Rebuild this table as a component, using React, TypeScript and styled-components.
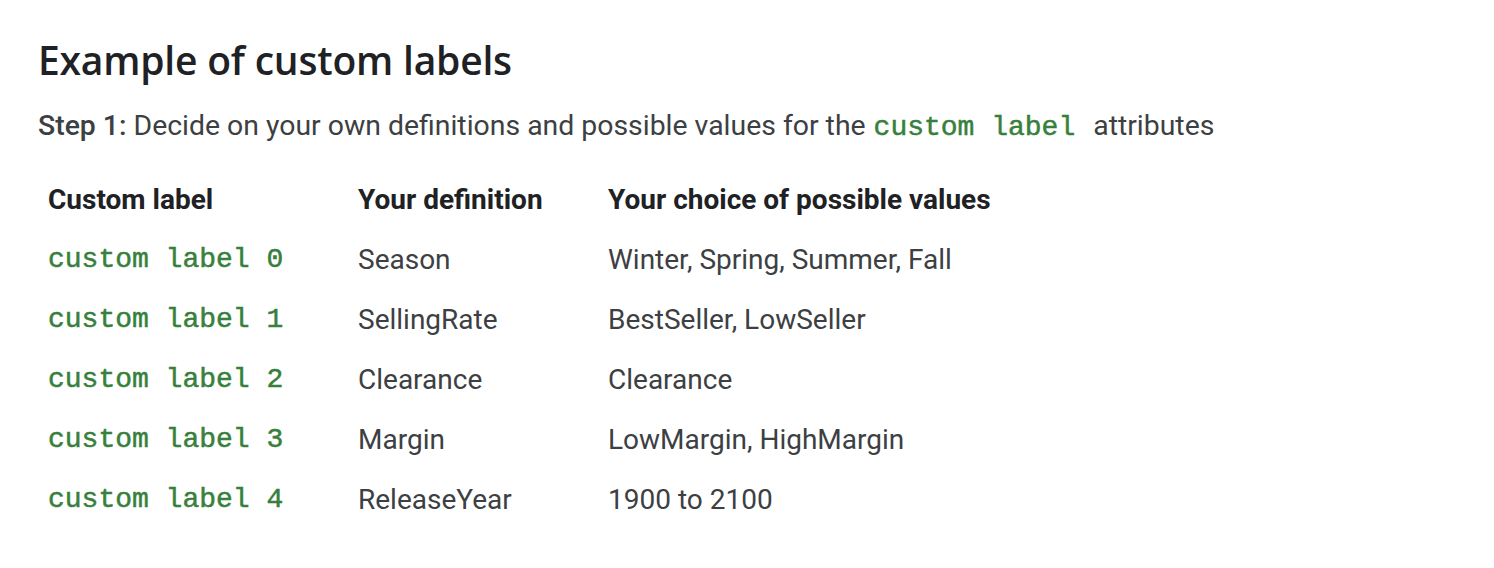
import React from "react";
import styled, { createGlobalStyle } from "styled-components";

const Global = createGlobalStyle`
  html, body { margin: 0; padding: 0; background: #fff; }
  body { font-family: Roboto, "Liberation Sans", Arial, sans-serif; -webkit-font-smoothing: antialiased; }
`;

const Page = styled.div`
  padding: 36px 38px 0 38px;
  color: #3c4043;
`;

const Title = styled.h2`
  margin: 0;
  font-family: "Open Sans", Roboto, sans-serif;
  font-weight: 600;
  font-size: 39px;
  line-height: 48px;
  color: #202124;
  letter-spacing: -0.2px;
`;

const Para = styled.p`
  margin: 24px 0 0 0;
  font-size: 28.4px;
  line-height: 36px;
  color: #3c4043;
  white-space: nowrap;
`;

const Strong = styled.strong`
  font-weight: 500;
  color: #3c4043;
`;

const Code = styled.code<{ $inline?: boolean }>`
  font-family: "Liberation Mono", "Courier New", monospace;
  font-size: 28px;
  font-weight: 400;
  -webkit-text-stroke: 0.5px #37803c;
  color: #37803c;
  margin: ${(p) => (p.$inline ? "0 18px 0 8px" : "0")};
`;

const Table = styled.div`
  margin-top: 23px;
  display: grid;
  grid-template-columns: 310px 250px 1fr;
`;

const Cell = styled.div<{ $head?: boolean }>`
  padding: 0 10px;
  height: 60px;
  display: flex;
  align-items: center;
  font-size: 28px;
  font-weight: ${(p) => (p.$head ? 700 : 400)};
  color: ${(p) => (p.$head ? "#202124" : "#3c4043")};
  white-space: nowrap;
`;

const rows = [
  ["custom label 0", "Season", "Winter, Spring, Summer, Fall"],
  ["custom label 1", "SellingRate", "BestSeller, LowSeller"],
  ["custom label 2", "Clearance", "Clearance"],
  ["custom label 3", "Margin", "LowMargin, HighMargin"],
  ["custom label 4", "ReleaseYear", "1900 to 2100"],
];

export default function App() {
  return (
    <>
      <Global />
      <Page>
        <Title>Example of custom labels</Title>
        <Para>
          <Strong>Step 1:</Strong> Decide on your own definitions and possible values for the
          <Code $inline>custom label</Code>attributes
        </Para>
        <Table>
          <Cell $head>Custom label</Cell>
          <Cell $head>Your definition</Cell>
          <Cell $head>Your choice of possible values</Cell>
          {rows.map((r) => (
            <React.Fragment key={r[0]}>
              <Cell>
                <Code>{r[0]}</Code>
              </Cell>
              <Cell>{r[1]}</Cell>
              <Cell>{r[2]}</Cell>
            </React.Fragment>
          ))}
        </Table>
      </Page>
    </>
  );
}
